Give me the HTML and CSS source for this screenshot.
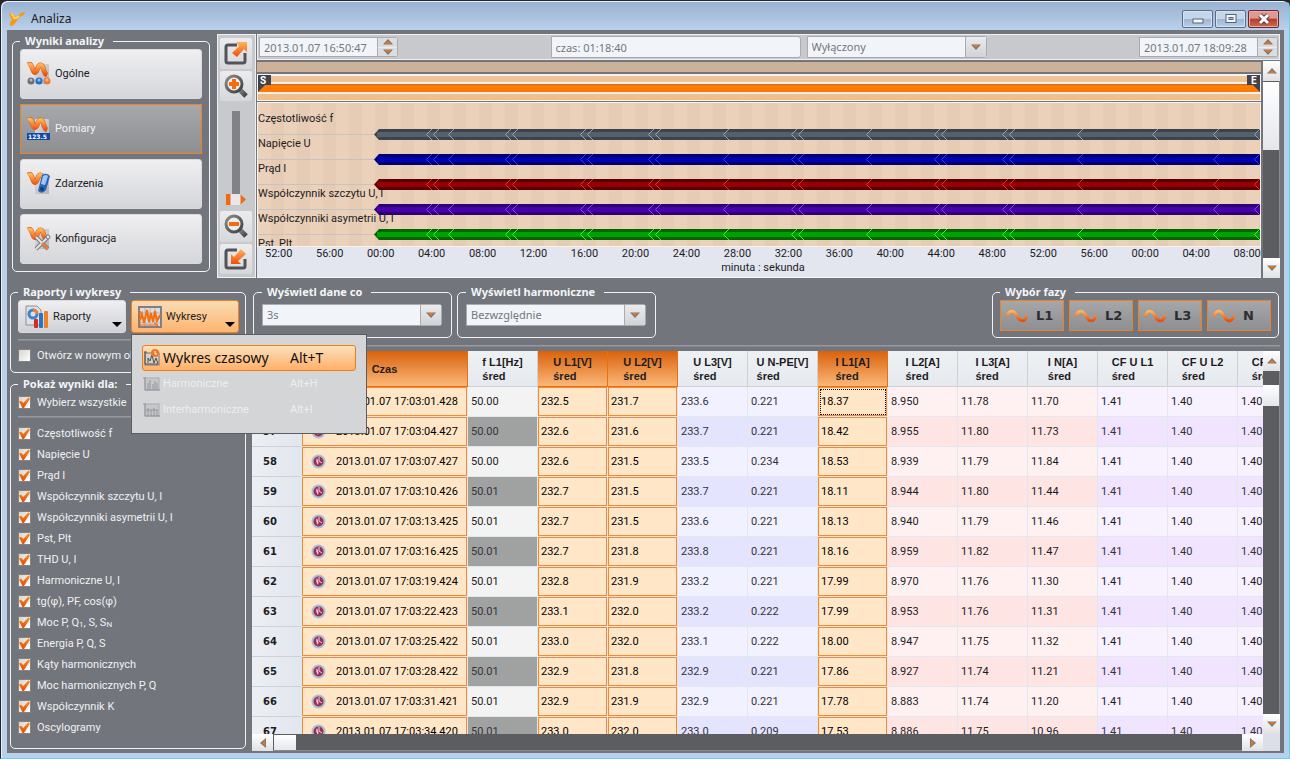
FILE: index.html
```html
<!DOCTYPE html>
<html lang="pl">
<head>
    <meta charset="UTF-8">
    <meta name="viewport" content="width=device-width, initial-scale=1.0">
    <link rel="stylesheet" href="styles.css">
    <title>Analiza</title>
</head>
<body>
<div class="window">
    <header class="titlebar">
        <svg class="logo" width="18" height="16" viewBox="0 0 18 16">
            <defs>
                <linearGradient id="orange" x1="0" y1="0" x2="0" y2="1">
                    <stop offset="0" stop-color="#ffb45a"/><stop offset="1" stop-color="#ee4e08"/>
                </linearGradient>
                <linearGradient id="paper" x1="0" y1="0" x2="1" y2="1">
                    <stop offset="0" stop-color="#e2e2e5"/><stop offset="1" stop-color="#b0b2b6"/>
                </linearGradient>
                <linearGradient id="steel" x1="0" y1="0" x2="1" y2="1">
                    <stop offset="0" stop-color="#8c8c8c"/><stop offset="1" stop-color="#3e4044"/>
                </linearGradient>
                <symbol id="wave" viewBox="0 0 24 24">
                    <rect x="8" y="2" width="14" height="20" rx="1" fill="url(#paper)"/>
                    <path d="M1 3C6 0 5 11 8 10.500C11 10 10 3 13.500 3C17.500 3 15.500 11 20 13" fill="none" stroke="#d0601c" stroke-width="5"/>
                    <path d="M1 3C6 0 5 11 8 10.500C11 10 10 3 13.500 3C17.500 3 15.500 11 20 13" fill="none" stroke="url(#orange)" stroke-width="4"/>
                </symbol>
                <symbol id="up" viewBox="0 0 10 6"><path d="M0 5.500L5 0L10 5.500Z" fill="#777"/><path d="M2 5L5 2L8 5Z" fill="#f4730f"/></symbol>
                <symbol id="down" viewBox="0 0 10 6"><path d="M0 0.500L5 6L10 0.500Z" fill="#777"/><path d="M2 1L5 4L8 1Z" fill="#f4730f"/></symbol>
            </defs>
            <path d="M1 3Q4 0 7 5Q8 7 10 5Q13 1 17 1Q17 4 13 5Q10 8 8 11Q6 15 2 15Q1 11 4 9Z" fill="#f59a12"/>
            <path d="M3 3Q5 3 6 7Q8 8 11 5" fill="none" stroke="#ffd058" stroke-width="2"/>
        </svg>
        <h1>Analiza</h1>
        <div class="window-buttons">
            <button type="button" aria-label="Minimalizuj"><svg width="14" height="12" viewBox="0 0 14 12"><rect x="2" y="6" width="10" height="4" fill="#f4f6f8" stroke="#5a6478"/></svg></button>
            <button type="button" aria-label="Maksymalizuj"><svg width="14" height="12" viewBox="0 0 14 12"><rect x="2" y="1.500" width="10" height="8" fill="#f4f6f8" stroke="#5a6478"/><rect x="5" y="4.500" width="4" height="2" fill="#9fb6d4" stroke="#5a6478"/></svg></button>
            <button type="button" class="close" aria-label="Zamknij"><svg width="14" height="12" viewBox="0 0 14 12"><path d="M3 2L11 10M11 2L3 10" stroke="#5c3a40" stroke-width="5"/><path d="M3 2L11 10M11 2L3 10" stroke="#fff" stroke-width="3"/></svg></button>
        </div>
    </header>

    <main>
        <section class="top">
            <fieldset class="results">
                <legend>Wyniki analizy</legend>
                <button type="button">
                    <svg width="24" height="24"><use href="#wave"/><circle cx="4" cy="19" r="3.500" fill="#6c6e72"/><circle cx="12" cy="19" r="3.500" fill="#2470c8"/><circle cx="20" cy="19" r="3.500" fill="#f07830"/><circle cx="4" cy="18" r="1.500" fill="#bbb"/><circle cx="12" cy="18" r="1.500" fill="#7fc4ff"/><circle cx="20" cy="18" r="1.500" fill="#ffc090"/></svg>
                    Ogólne
                </button>
                <button type="button" class="active">
                    <svg width="24" height="24"><use href="#wave"/><rect x="0" y="16" width="23" height="7" fill="#1148a8"/><text x="1" y="22" class="digits">123.5</text></svg>
                    Pomiary
                </button>
                <button type="button">
                    <svg width="24" height="24"><use href="#wave"/><path d="M15 3Q19 0 23 4L19 18Q15 23 11 19Z" fill="#2a66b8"/><path d="M16 4Q19 2 21 4L18 13L14 12Z" fill="#9cc8f4"/><circle cx="15" cy="17" r="2" fill="#123c80"/></svg>
                    Zdarzenia
                </button>
                <button type="button">
                    <svg width="24" height="24"><use href="#wave"/><path d="M9 10L21 22M9 22L21 10" stroke="#77797e" stroke-width="4"/><path d="M9 10L21 22M9 22L21 10" stroke="#e2e4e6" stroke-width="2"/><path d="M15 16L21 22" stroke="#ee7a3a" stroke-width="3"/><circle cx="21" cy="10" r="2" fill="#e2e4e6" stroke="#77797e"/></svg>
                    Konfiguracja
                </button>
            </fieldset>

            <div class="tools">
                <button type="button" aria-label="Rozwiń">
                    <svg width="24" height="24" viewBox="0 0 24 24"><path d="M13 4H4Q2 4 2 6V20Q2 22 4 22H19Q21 22 21 20V12" fill="none" stroke="#505358" stroke-width="3"/><path d="M12 1H23V11L20 8L13 16L8 12L15 5Z" fill="url(#orange)"/></svg>
                </button>
                <button type="button" aria-label="Powiększ">
                    <svg width="24" height="24" viewBox="0 0 24 24"><path d="M15 15L22 22" stroke="url(#steel)" stroke-width="5"/><circle cx="10" cy="10" r="8" fill="#eceef0" stroke="url(#steel)" stroke-width="3"/><path d="M10 5V15M5 10H15" stroke="#fa6a0c" stroke-width="4"/></svg>
                </button>
                <input type="range" class="zoom" min="0" max="10" value="0" aria-label="Skala">
                <button type="button" aria-label="Pomniejsz">
                    <svg width="24" height="24" viewBox="0 0 24 24"><path d="M15 15L22 22" stroke="url(#steel)" stroke-width="5"/><circle cx="10" cy="10" r="8" fill="#eceef0" stroke="url(#steel)" stroke-width="3"/><path d="M5 10H15" stroke="#fa6a0c" stroke-width="4"/></svg>
                </button>
                <button type="button" aria-label="Zwiń">
                    <svg width="24" height="24" viewBox="0 0 24 24"><path d="M13 3H4Q2 3 2 5V19Q2 21 4 21H19Q21 21 21 19V12" fill="none" stroke="#505358" stroke-width="3"/><path d="M7 17V7L10 10L17 2L22 7L14 14L17 17Z" fill="url(#orange)"/></svg>
                </button>
            </div>

            <div class="timeline">
                <div class="timebar">
                    <div class="spinner">
                        <input type="text" value="2013.01.07 16:50:47" aria-label="Początek">
                        <div class="steps"><button type="button" aria-label="Więcej"><svg width="10" height="6"><use href="#up"/></svg></button><button type="button" aria-label="Mniej"><svg width="10" height="6"><use href="#down"/></svg></button></div>
                    </div>
                    <div class="middle">
                        <input type="text" class="duration" value="czas: 01:18:40" aria-label="Czas trwania">
                        <div class="select">
                            <select aria-label="Tryb"><option>Wyłączony</option></select>
                            <span><svg width="10" height="6"><use href="#down"/></svg></span>
                        </div>
                    </div>
                    <div class="spinner">
                        <input type="text" value="2013.01.07 18:09:28" aria-label="Koniec">
                        <div class="steps"><button type="button" aria-label="Więcej"><svg width="10" height="6"><use href="#up"/></svg></button><button type="button" aria-label="Mniej"><svg width="10" height="6"><use href="#down"/></svg></button></div>
                    </div>
                </div>
                <div class="chart-row">
                    <div class="chart">
                        <div class="strip"></div>
                        <div class="range">
                            <div class="range-bar"></div>
                            <span class="marker start">S</span>
                            <span class="marker end">E</span>
                        </div>
                        <div class="plot">
                            <svg id="lanes" viewBox="0 0 1002 143" preserveAspectRatio="none"></svg>
                            <ul>
                                <li>Częstotliwość f</li>
                                <li>Napięcie U</li>
                                <li>Prąd I</li>
                                <li>Współczynnik szczytu U, I</li>
                                <li>Współczynniki asymetrii U, I</li>
                                <li>Pst, Plt</li>
                            </ul>
                        </div>
                        <div class="axis">
                            <div class="ticks" id="ticks"></div>
                            <div class="unit">minuta : sekunda</div>
                        </div>
                    </div>
                    <div class="scroll">
                        <button type="button" aria-label="W górę"><svg width="10" height="6"><use href="#up"/></svg></button>
                        <div class="track"><div class="thumb tall"></div></div>
                        <button type="button" aria-label="W dół"><svg width="10" height="6"><use href="#down"/></svg></button>
                    </div>
                </div>
            </div>
        </section>

        <section class="bottom">
            <aside>
                <fieldset class="reports">
                    <legend>Raporty i wykresy</legend>
                    <div class="pair">
                        <button type="button" class="drop">
                            <svg width="24" height="24" viewBox="0 0 24 24"><path d="M1 1H12L16 5V20H1Z" fill="#dfe1e6" stroke="#8d9096"/><circle cx="8" cy="9" r="4" fill="none" stroke="#3a86d0" stroke-width="3"/><path d="M8 5A4 4 0 0 1 12 9" fill="none" stroke="#f08030" stroke-width="3"/><rect x="9" y="14" width="4" height="9" rx="1" fill="#d82a20"/><rect x="14" y="8" width="4" height="15" rx="1" fill="#2a74c4"/><rect x="19" y="6" width="4" height="17" rx="1" fill="#f08028"/></svg>
                            Raporty
                            <i class="caret"></i>
                        </button>
                        <div class="menu-holder">
                            <button type="button" class="drop open">
                                <svg width="24" height="24" viewBox="0 0 24 24"><rect x="1" y="2" width="22" height="20" fill="#dcdde0" stroke="#7e8086" stroke-width="2"/><path d="M2 8H22M2 13H22M2 18H22M7 3V21M12 3V21M17 3V21" stroke="#b4b6ba"/><path d="M2 23V7M0 10L2 6L4 10M2 20H20M16 18L20 20L16 23" fill="none" stroke="#f06a10"/><path d="M2 15L4 9L6 18L9 5L11 17L13 8L15 17L17 6L19 16L22 10" fill="none" stroke="#f5700c" stroke-width="2"/></svg>
                                Wykresy
                                <i class="caret"></i>
                            </button>
                            <div class="menu">
                                <button type="button" class="hover">
                                    <svg width="18" height="18" viewBox="0 0 18 18"><rect x="2" y="4" width="14" height="12" fill="#d4d0cc" stroke="#77746f"/><path d="M1 3H4M2 3V15H15M5 14V9L7 12L9 6L11 14L13 9L15 15" fill="none" stroke="#55524e"/><circle cx="12" cy="4" r="4" fill="#f07820"/><path d="M12 2V5H14" fill="none" stroke="#fff"/></svg>
                                    <span>Wykres czasowy</span><kbd>Alt+T</kbd>
                                </button>
                                <button type="button" disabled>
                                    <svg width="18" height="18" viewBox="0 0 18 18"><rect x="2" y="3" width="14" height="12" fill="#c6c7ca" stroke="#a9abaf"/><path d="M0 3H3M2 3V15H17M5 15V8M7 15V5M10 15V9M12 15V6M14 15V8" fill="none" stroke="#94969b"/></svg>
                                    <span>Harmoniczne</span><kbd>Alt+H</kbd>
                                </button>
                                <button type="button" disabled>
                                    <svg width="18" height="18" viewBox="0 0 18 18"><rect x="2" y="3" width="14" height="12" fill="#c6c7ca" stroke="#a9abaf"/><path d="M0 3H3M2 3V15H17M5 15V7M8 15V9M11 15V7M14 15V9M3 9H15" fill="none" stroke="#94969b"/></svg>
                                    <span>Interharmoniczne</span><kbd>Alt+I</kbd>
                                </button>
                            </div>
                        </div>
                    </div>
                    <hr>
                    <label class="check"><input type="checkbox"> Otwórz w nowym oknie</label>
                </fieldset>
                <fieldset class="filters">
                    <legend>Pokaż wyniki dla:</legend>
                    <label class="check"><input type="checkbox" checked> Wybierz wszystkie</label>
                    <hr>
                    <label class="check"><input type="checkbox" checked> Częstotliwość f</label>
                    <label class="check"><input type="checkbox" checked> Napięcie U</label>
                    <label class="check"><input type="checkbox" checked> Prąd I</label>
                    <label class="check"><input type="checkbox" checked> Współczynnik szczytu U, I</label>
                    <label class="check"><input type="checkbox" checked> Współczynniki asymetrii U, I</label>
                    <label class="check"><input type="checkbox" checked> Pst, Plt</label>
                    <label class="check"><input type="checkbox" checked> THD U, I</label>
                    <label class="check"><input type="checkbox" checked> Harmoniczne U, I</label>
                    <label class="check"><input type="checkbox" checked> tg(φ), PF, cos(φ)</label>
                    <label class="check"><input type="checkbox" checked> <span>Moc P, Q<sub>1</sub>, S, S<sub>N</sub></span></label>
                    <label class="check"><input type="checkbox" checked> Energia P, Q, S</label>
                    <label class="check"><input type="checkbox" checked> Kąty harmonicznych</label>
                    <label class="check"><input type="checkbox" checked> Moc harmonicznych P, Q</label>
                    <label class="check"><input type="checkbox" checked> Współczynnik K</label>
                    <label class="check"><input type="checkbox" checked> Oscylogramy</label>
                </fieldset>
            </aside>

            <div class="data">
                <div class="options">
                    <fieldset>
                        <legend>Wyświetl dane co</legend>
                        <div class="select">
                            <select aria-label="Wyświetl dane co"><option>3s</option></select>
                            <span><svg width="10" height="6"><use href="#down"/></svg></span>
                        </div>
                    </fieldset>
                    <fieldset>
                        <legend>Wyświetl harmoniczne</legend>
                        <div class="select">
                            <select aria-label="Wyświetl harmoniczne"><option>Bezwzględnie</option></select>
                            <span><svg width="10" height="6"><use href="#down"/></svg></span>
                        </div>
                    </fieldset>
                    <fieldset class="phases">
                        <legend>Wybór fazy</legend>
                        <div class="phase-buttons">
                            <button type="button"><svg width="22" height="14" viewBox="0 0 22 14"><path d="M1 8C3 0 8 1 11 7S19 14 21 6" fill="none" stroke="url(#orange)" stroke-width="3"/></svg>L1</button>
                            <button type="button"><svg width="22" height="14" viewBox="0 0 22 14"><path d="M1 8C3 0 8 1 11 7S19 14 21 6" fill="none" stroke="url(#orange)" stroke-width="3"/></svg>L2</button>
                            <button type="button"><svg width="22" height="14" viewBox="0 0 22 14"><path d="M1 8C3 0 8 1 11 7S19 14 21 6" fill="none" stroke="url(#orange)" stroke-width="3"/></svg>L3</button>
                            <button type="button"><svg width="22" height="14" viewBox="0 0 22 14"><path d="M1 8C3 0 8 1 11 7S19 14 21 6" fill="none" stroke="url(#orange)" stroke-width="3"/></svg>N</button>
                        </div>
                    </fieldset>
                </div>
                <hr>
                <div class="grid">
                    <div class="table-box">
                        <table>
                            <colgroup><col class="c-num"><col class="c-time"></colgroup>
                            <thead>
                                <tr>
                                    <th></th>
                                    <th class="sel">Czas</th>
                                    <th><span>f L1[Hz]<br>śred</span></th>
                                    <th class="sel"><span>U L1[V]<br>śred</span></th>
                                    <th class="sel"><span>U L2[V]<br>śred</span></th>
                                    <th><span>U L3[V]<br>śred</span></th>
                                    <th><span>U N-PE[V]<br>śred</span></th>
                                    <th class="sel"><span>I L1[A]<br>śred</span></th>
                                    <th><span>I L2[A]<br>śred</span></th>
                                    <th><span>I L3[A]<br>śred</span></th>
                                    <th><span>I N[A]<br>śred</span></th>
                                    <th><span>CF U L1<br>śred</span></th>
                                    <th><span>CF U L2<br>śred</span></th>
                                    <th><span>CF U L3<br>śred</span></th>
                                </tr>
                            </thead>
                            <tbody id="rows"></tbody>
                        </table>
                    </div>
                    <div class="scroll">
                        <button type="button" aria-label="W górę"><svg width="10" height="6"><use href="#up"/></svg></button>
                        <div class="track"><div class="thumb low"></div></div>
                        <button type="button" aria-label="W dół"><svg width="10" height="6"><use href="#down"/></svg></button>
                    </div>
                    <div class="scroll across">
                        <button type="button" aria-label="W lewo"><svg width="6" height="10" viewBox="0 0 6 10"><path d="M6 0L0 5L6 10Z" fill="#777"/><path d="M5 2L2 5L5 8Z" fill="#f4730f"/></svg></button>
                        <div class="track"><div class="thumb"></div></div>
                        <button type="button" aria-label="W prawo"><svg width="6" height="10" viewBox="0 0 6 10"><path d="M0 0L6 5L0 10Z" fill="#777"/><path d="M1 2L4 5L1 8Z" fill="#f4730f"/></svg></button>
                    </div>
                </div>
            </div>
        </section>
    </main>
</div>
<script src="script.js"></script>
</body>
</html>
```
FILE: styles.css
```css
* {box-sizing: border-box;}
body {margin: 0; background: #26262c; font-family: Roboto, sans-serif; font-size: 11px; line-height: 14px; color: #1c1c1e;}
button, input, select {font: inherit; color: inherit; margin: 0;}
button {padding: 0; border: 0;}
svg {display: block; flex: none;}
hr {border: 0; border-top: 1px solid #96989d; border-bottom: 1px solid #85878c; margin: 0;}

.window {height: 100vh; display: flex; flex-direction: column; padding: 0 5px 5px 6px; border: 1px solid #22252c; border-right-color: #5fd6e8; border-bottom-color: #5fd6e8; border-radius: 7px 7px 0 0; background: linear-gradient(#98b0d0, #b9cfea 28px); box-shadow: inset 1px 1px 0 #e8f1fa; overflow: hidden;}
.titlebar {display: flex; align-items: center; height: 29px; flex: none; margin: 0 -4px; padding: 7px 9px 0 5px;}
.titlebar h1 {font-family: "Noto Sans", sans-serif; font-size: 12px; font-weight: normal; margin: 0 auto 0 5px;}
.window-buttons {display: flex; gap: 2px;}
.window-buttons button {width: 31px; height: 18px; display: grid; place-items: center; border: 1px solid #5c6c86; border-radius: 2px; background: linear-gradient(#c4d6ea 50%, #9cb5d3 50%, #b8cfe8); box-shadow: inset 0 0 0 1px #d4e2f2;}
.window-buttons .close {border-color: #6a2830; background: linear-gradient(#dc9a90 45%, #b83c28 50%, #cc6a50); box-shadow: inset 0 0 0 1px #e4aca4;}

main {flex: 1; min-height: 0; display: flex; flex-direction: column; background: #72757c; padding: 4px 4px 2px 3px;}

fieldset {min-width: 0; margin: 0; padding: 1px 7px 7px; border: 1px solid #f2f3f5; border-radius: 5px;}
legend {padding: 0 9px 0 5px; font-family: "Noto Sans", sans-serif; font-weight: bold; font-size: 11px; line-height: 14px; color: #f4f5f7;}

/* gorna czesc */
.top {display: flex; height: 244px; flex: none;}
.results {width: 198px; height: 238px; margin: 0 7px 0 2px; flex: none; display: flex; flex-direction: column;}
.results button {display: flex; align-items: center; gap: 4px; width: 100%; height: 50px; flex: none; margin-bottom: 5px; padding-left: 6px; border: 1px solid #d9dadd; border-radius: 3px; background: linear-gradient(#efeff1, #d5d6da); text-align: left;}
.results .active {border-color: #f08024; border-radius: 0; color: #f2f2f4; background: linear-gradient(#a7a8aa, #8e8f92);}
.digits {fill: #fff; font-family: "DejaVu Sans"; font-weight: bold; font-size: 6px;}

.tools {width: 39px; margin-right: 1px; flex: none; display: flex; flex-direction: column; align-items: center; gap: 2px; padding: 3px 1px 3px 0; border: 1px solid #eef0f3; background: #c8c9cd;}
.tools button {width: 32px; height: 31px; display: grid; place-items: center; border-radius: 2px; background: linear-gradient(#ececee, #d6d7da);}
.zoom {appearance: none; writing-mode: vertical-lr; direction: rtl; width: 20px; height: 94px; flex: none; margin: 8px 0 4px; background: linear-gradient(90deg, transparent 6px, #808288 6px 14px, transparent 14px);}
.zoom::-webkit-slider-thumb {appearance: none; width: 20px; height: 11px; background: linear-gradient(90deg, #f06a10 4px, #e8e8ea 5px 14px, #f06a10 15px); clip-path: polygon(0 0, 14px 0, 100% 50%, 14px 100%, 0 100%);}

.timeline {flex: 1; min-width: 0; display: flex; flex-direction: column; gap: 1px;}
.timebar {display: flex; justify-content: space-between; align-items: center; height: 26px; flex: none; padding: 0 1px; border: 1px solid #eef0f3; background: #c8c9cd; color: #74767c; font-family: "Noto Sans", sans-serif;}
.timebar input {height: 20px; border: 1px solid #a8abb0; background: #f1f5fa; padding: 0 4px;}
.spinner {display: flex; height: 20px;}
.spinner input {width: 119px;}
.steps {display: grid; width: 20px; border: 1px solid #a8abb0; border-left: 0; border-radius: 0 3px 3px 0; background: #eee; gap: 1px;}
.steps button {display: grid; place-items: center; background: #dcdde0;}
.middle {display: flex; gap: 6px;}
.timebar .duration {width: 250px; height: 22px; border-radius: 0 3px 3px 0;}
.select {display: grid; width: 180px; height: 22px; color: #74767c; font-family: "Noto Sans", sans-serif;}
.select select {grid-area: 1/1; appearance: none; border: 1px solid #a8abb0; border-radius: 0 3px 3px 0; background: #f1f5fa; padding: 0 24px 0 4px;}
.select span {grid-area: 1/1; justify-self: end; width: 21px; margin: 1px 1px 1px 0; display: grid; place-items: center; border-left: 1px solid #a8abb0; background: linear-gradient(#eaebed, #d2d3d7); pointer-events: none;}

.chart-row {flex: 1; min-height: 0; display: flex; gap: 2px;}
.chart {flex: 1; min-width: 0; display: flex; flex-direction: column; margin-top: 1px;}
.strip {height: 10px; flex: none; background: #cdb199;}
.range {position: relative; height: 27px; flex: none; margin: 2px 0 1px; padding: 6px 0; background: linear-gradient(#eec49c, #f0be88); border: solid #f6f2ee; border-width: 2px 1px 1px;}
.range-bar {height: 12px; border: solid #f4f0f0; border-width: 2px 0; background: linear-gradient(#c86a18, #ff7e08 2px, #ff7600);}
.marker {position: absolute; top: -1px; width: 13px; height: 17px; background: #3f434a; color: #fff; font-weight: bold; font-size: 10px; line-height: 11px;}
.start {left: 0; padding-left: 2px; clip-path: polygon(0 0, 100% 0, 100% 10px, 7px 10px, 0 100%);}
.end {right: 0; padding-left: 4px; clip-path: polygon(0 0, 100% 0, 100% 100%, 6px 10px, 0 10px);}
.plot {display: grid; height: 145px; flex: none; overflow: hidden; border: solid #f6f2ee; border-width: 1px; background: repeating-linear-gradient(90deg, #ebd1ba 0 13px, #e6ccb5 13px 26px);}
.plot svg, .plot ul {grid-area: 1/1;}
.plot svg {width: 100%; height: 143px;}
.plot ul {height: 143px; list-style: none; margin: 0; padding: 3px 0 0; overflow: hidden;}
.plot li {line-height: 25px;}
.axis {flex: 1; padding: 0 0 0 8px; background: #e3e6ee; border-bottom: 1px solid #f4f6f8; text-align: center;}
.ticks {display: flex; justify-content: space-between;}

.scroll {width: 17px; flex: none; display: flex; flex-direction: column; background: #5c5d61;}
.scroll button {flex: none; height: 20px; display: grid; place-items: center; background: linear-gradient(#fff, #dfe1e4);}
.track {flex: 1; padding: 1px 0; background: #5c5d61; border-right: 1px solid #888a8f;}
.thumb {height: 21px; width: 16px; background: linear-gradient(#fff, #e4e6ea);}
.thumb.tall {height: 68px;}
.thumb.low {margin-top: 13px;}

/* dolna czesc */
.bottom {flex: 1; min-height: 0; display: flex; gap: 6px; padding-top: 7px;}
aside {width: 236px; flex: none; display: flex; flex-direction: column; gap: 4px; padding-bottom: 2px;}
.reports {height: 88px;}
.reports, .filters {padding-right: 5px;}
.filters {flex: 1;}
.pair {display: flex; gap: 5px;}
.drop {position: relative; width: 108px; height: 33px; flex: none; display: flex; align-items: center; gap: 4px; padding-left: 6px; border: 1px solid #d9dadd; border-radius: 3px; background: linear-gradient(#efeff1, #d0d1d6);}
.drop.open {border-color: #f08024; background: linear-gradient(#f8dcb4, #ffb46e);}
.caret {position: absolute; right: 3px; bottom: 5px; border: 5px solid transparent; border-top-color: #000; border-bottom: 0;}
.reports hr {margin-top: 6px; margin-bottom: 4px;}
.filters hr {margin-top: 3px; margin-bottom: 5px;}
.check {display: flex; align-items: center; gap: 6px; height: 21px; color: #f0f1f3;}
.check input {appearance: none; width: 13px; height: 13px; flex: none; border: 1px solid #85837f; background: linear-gradient(135deg, #d6d4cc, #fff);}
.check input:checked::before {content: ""; display: block; width: 11px; height: 11px; background: linear-gradient(#f7941e, #e64a08); clip-path: polygon(0 40%, 20% 35%, 38% 55%, 85% 5%, 100% 15%, 45% 100%, 32% 100%);}
.check sub {font-size: 8px; line-height: 0; vertical-align: -1px;}

.menu-holder {position: relative;}
.menu {position: absolute; left: 0; top: 34px; z-index: 5; width: 236px; height: 100px; padding: 10px; border: 1px solid #5a5d63; background: #d4d5d7;}
.menu button {width: 214px; height: 26px; display: flex; align-items: center; gap: 2px; border: 1px solid transparent; border-radius: 3px; background: none; color: #eceef1; text-align: left;}
.menu span {width: 125px;}
.menu kbd {font: inherit;}
.menu .hover {border: 1px solid #f57c14; color: #111; font-family: "Noto Sans", sans-serif; font-size: 14px; background: linear-gradient(#fbe0bc, #ffb068);}

.data {flex: 1; min-width: 0; display: flex; flex-direction: column;}
.options {display: flex; gap: 5px; margin-bottom: 7px; padding: 0 1px;}
.options fieldset {height: 53px; padding: 5px 9px 0 8px;}
.options .phases {margin-left: auto; padding: 1px 7px 0;}
.phase-buttons {display: flex; gap: 5px;}
.phase-buttons button {width: 64px; height: 31px; display: flex; align-items: center; gap: 8px; padding-left: 5px; border: 1px solid #f08024; background: linear-gradient(#a6a7a9, #8e8f92); color: #2c2d30; font-family: "DejaVu Sans"; font-weight: bold; font-size: 13px;}

.grid {flex: 1; min-height: 0; display: grid; grid-template: 1fr 17px / 1fr 17px; margin-top: 4px; background: #dcdfe8;}
.table-box {overflow: hidden; background: #eef1f5;}
table {width: 1056px; table-layout: fixed; border-spacing: 0;}
.c-num {width: 50px;}
.c-time {width: 166px;}
th, td {border: solid #e2e7ee; border-width: 0 1px 1px 0;}
th {height: 36px; padding: 0; background: linear-gradient(#eef1f4, #e6e9ed); border-color: #cdd0d5; font-family: "Liberation Sans", sans-serif; font-size: 11px; line-height: 14px;}
th span {display: inline-block; text-align: left;}
th.sel {background: linear-gradient(#d9620c, #fbb778); border-color: #e8700e;}
td {height: 30px; padding: 0 0 0 3px; white-space: nowrap; background: #fff1f1;}
td.num {background: linear-gradient(90deg, #eceff3, #e2e6ee); padding: 1px 0 0 11px; border-bottom-color: #cdd2da; font-family: "DejaVu Sans"; font-weight: bold; font-size: 10px;}
td.f {background: #f3f3f3;}
td.u {background: #f1f1ff; color: #33333c;}
td.cf {background: #f8f1ff;}
tr:nth-child(even) .f {background: #a0a2a1; color: #33333c;}
tr:nth-child(even) .u {background: #e4e4ff;}
tr:nth-child(even) .i {background: #ffe4e4;}
tr:nth-child(even) .cf {background: #f1e4ff; color: #33333c;}
tr td.sel {background: #ffe6c6; box-shadow: inset 0 0 0 1px #f58a32; color: #000;}
tbody tr:first-child td.focus {outline: 1px dotted #000; outline-offset: -3px;}
.stamp {display: flex; align-items: center; gap: 10px; padding-left: 6px;}
.across {grid-column: 1; width: auto; flex-direction: row;}
.across button {width: 21px; height: auto;}
.across .thumb {width: 22px; height: 15px;}
.across .track {padding: 1px; border-right: 0; border-bottom: 1px solid #888a8f;}
```
FILE: script.js
```js
// =====================================================
// os czasu
// =====================================================
var colors = [
    ['#3a444e', '#55606a', '#9aa6ae'],
    ['#00006c', '#0000b4', '#3c3ce8'],
    ['#580000', '#960000', '#e83030'],
    ['#2c0070', '#4800ac', '#9040f0'],
    ['#006400', '#00a000', '#40f040']
];
var marks = [168, 175, 190, 247, 254, 322, 329, 390, 397, 465, 533, 540, 608, 676, 683, 744, 751, 819, 894, 955, 996];
var lanes = '';
for (var i = 0; i < colors.length; i++) {
    var y = 26 + i * 25;
    var c = colors[i];
    lanes += '<path d="M0 ' + (y + 5.5) + 'H118" stroke="#c4c4c6"/>';
    lanes += '<path d="M116 ' + (y + 5.5) + 'L121 ' + y + 'H1002V' + (y + 11) + 'H121Z" fill="' + c[0] + '"/>';
    lanes += '<path d="M119 ' + (y + 5.5) + 'H1002" stroke="' + c[1] + '" stroke-width="5"/>';
    for (var j = 0; j < marks.length; j++) {
        lanes += '<path d="M' + (marks[j] + 6) + ' ' + y + 'l-5.5 5.5l5.5 5.5" fill="none" stroke="' + c[2] + '"/>';
    }
}
document.getElementById('lanes').innerHTML = lanes;

var ticks = '';
for (i = 0; i < 20; i++) {
    var minute = (52 + i * 4) % 60;
    ticks += '<span>' + (minute < 10 ? '0' : '') + minute + ':00</span>';
}
document.getElementById('ticks').innerHTML = ticks;

// =====================================================
// tabela pomiarow
// =====================================================
var classes = ['f', 'sel', 'sel', 'u', 'u', 'sel focus', 'i', 'i', 'i', 'cf', 'cf', 'cf'];
var data = [
    ['01.428', '50.00', '232.5', '231.7', '233.6', '0.221', '18.37', '8.950', '11.78', '11.70'],
    ['04.427', '50.00', '232.6', '231.6', '233.7', '0.221', '18.42', '8.955', '11.80', '11.73'],
    ['07.427', '50.00', '232.6', '231.5', '233.5', '0.234', '18.53', '8.939', '11.79', '11.84'],
    ['10.426', '50.01', '232.7', '231.5', '233.7', '0.221', '18.11', '8.944', '11.80', '11.44'],
    ['13.425', '50.01', '232.7', '231.5', '233.6', '0.221', '18.13', '8.940', '11.79', '11.46'],
    ['16.425', '50.01', '232.7', '231.8', '233.8', '0.221', '18.16', '8.959', '11.82', '11.47'],
    ['19.424', '50.01', '232.8', '231.9', '233.2', '0.221', '17.99', '8.970', '11.76', '11.30'],
    ['22.423', '50.01', '233.1', '232.0', '233.2', '0.222', '17.99', '8.953', '11.76', '11.31'],
    ['25.422', '50.01', '233.0', '232.0', '233.1', '0.222', '18.00', '8.947', '11.75', '11.32'],
    ['28.422', '50.01', '232.9', '231.8', '232.9', '0.221', '17.86', '8.927', '11.74', '11.21'],
    ['31.421', '50.01', '232.9', '231.9', '232.9', '0.221', '17.78', '8.883', '11.74', '11.20'],
    ['34.420', '50.01', '233.0', '232.0', '233.0', '0.209', '17.53', '8.886', '11.75', '10.96']
];
var icon = '<svg width="15" height="15" viewBox="0 0 15 15"><circle cx="7.5" cy="7.5" r="7" fill="#a4c0dc"/><circle cx="7.5" cy="7.5" r="5" fill="#a02c50"/><path d="M6 4Q4 7 7 11Q8 8 7 7Z" fill="#f0d0dc"/><path d="M8 3V7L11 9" fill="none" stroke="#d8dcec"/></svg>';
var rows = '';
for (i = 0; i < data.length; i++) {
    var values = data[i].slice(1).concat(['1.41', '1.40', '1.40']);
    rows += '<tr><td class="num">' + (56 + i) + '</td>';
    rows += '<td class="sel"><div class="stamp">' + icon + '2013.01.07 17:03:' + data[i][0] + '</div></td>';
    for (j = 0; j < values.length; j++) {
        rows += '<td class="' + classes[j] + '">' + values[j] + '</td>';
    }
    rows += '</tr>';
}
document.getElementById('rows').innerHTML = rows;
```
